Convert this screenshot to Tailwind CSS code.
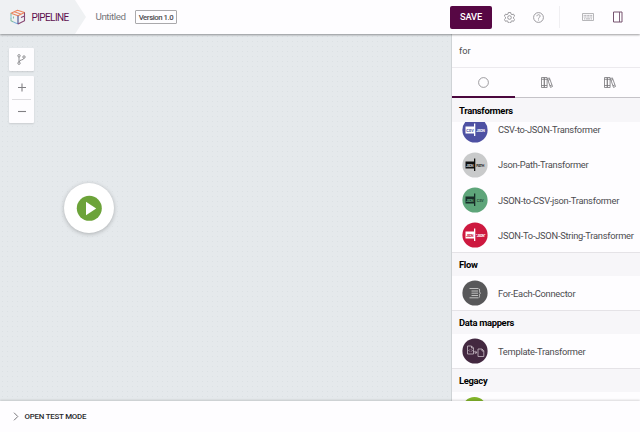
<!DOCTYPE html>
<html lang="en">
<head>
<meta charset="utf-8">
<title>Pipeline</title>
<script src="https://cdn.jsdelivr.net/npm/@tailwindcss/browser@4"></script>
</head>
<body class="w-[640px] h-[432px] overflow-hidden bg-[#fefdff] font-['Roboto',sans-serif] text-[#4c4c4f] flex flex-col">

<header class="relative z-10 h-[34px] shrink-0 flex items-center bg-[#fefdff] shadow-[0_1px_2px_rgba(0,0,0,0.38)]">
  <div class="w-[86px] h-full shrink-0 bg-[#eff1f3] [clip-path:polygon(0_0,75px_0,86px_50%,75px_100%,0_100%)] flex items-center pl-[10px] gap-[5.500px]">
    <svg class="w-4 h-4" viewBox="0 0 16 16" fill="none" stroke-width="1.100" stroke-linejoin="round">
      <path d="M1 4.200 7.500 1.200l7 2.400L8 6.800zM4.200 2.800l7.200 2.400" stroke="#eb8660"/>
      <path d="M1 4.200v3M1 9v2.700l2.500 1.200M3.500 7.500v2" stroke="#82bda2"/>
      <path d="M3.500 12.900 8 15M1 7.200v2" stroke="#83b6df"/>
      <path d="M8 15V6.800" stroke="#454b8a"/>
      <path d="M8 15l6.500-3.300V3.600M11 8.500l3.500-1.500" stroke="#894873"/>
    </svg>
    <span class="text-[10px] tracking-[-0.600px] text-[#5e104e]">PIPELINE</span>
  </div>
  <span class="ml-[9.500px] w-[39.500px] text-[9.800px] tracking-[-0.450px] text-[#77777b]">Untitled</span>
  <span class="w-[42px] h-[14px] border border-[#aaa9ac] rounded-[1px] flex items-center justify-center pt-px text-[7.800px] tracking-[-0.450px] font-medium whitespace-nowrap">Version 1.0</span>
  <button class="ml-[273px] w-[42px] h-[23px] rounded-[2px] bg-[#570744] text-white text-[9.300px] tracking-[-0.150px] font-medium">SAVE</button>
  <svg class="ml-[12px] w-[11px] h-[11px]" viewBox="0 0 24 24" fill="none" stroke="#929195" stroke-width="2"><path d="M9.5 1h5l.8 3.5 2 1.2 3.5-1 2.4 4.2-2.5 2.4v2.4l2.5 2.5-2.4 4.1-3.5-1-2 1.2-.8 3.5h-5l-.8-3.5-2-1.2-3.5 1L.8 16.200l2.500-2.500v-2.400L.8 8.900l2.400-4.200 3.500 1 2-1.200z"/><circle cx="12" cy="12" r="4"/></svg>
  <svg class="ml-[18px] w-[11px] h-[11px]" viewBox="0 0 22 22" fill="none" stroke="#929195" stroke-width="1.8"><circle cx="11" cy="11" r="9.800"/><path d="M7.800 8.500c0-4.200 6.500-4 6.500-.2 0 2.400-3.300 2.300-3.300 5M11 15v2"/></svg>
  <div class="ml-[15px] w-px h-[22px] bg-[#f0eff2]"></div>
  <svg class="ml-[22px] w-[12px] h-[8px]" viewBox="0 0 12 8" fill="none" stroke="#9b9a9e"><rect x=".4" y=".4" width="11.200" height="7.200" rx=".6" stroke-width=".8"/><path d="M1.700 2.400h8.600M1.700 4h8.600" stroke-width=".9" stroke-dasharray="1 .5"/><path d="M2 5.900h1M3.600 5.900h4.800M9 5.900h1" stroke-width=".8"/></svg>
  <svg class="ml-[19px] w-[10px] h-[12px]" viewBox="0 0 10 12" fill="none" stroke="#76536f"><path d="M.5 1v10h8.500V1z"/><path d="M6.500 1v10" stroke-width=".9"/></svg>
</header>

<main class="h-[367px] shrink-0 flex">
  <section class="w-[452px] shrink-0 border-r border-[#cfd3d6] bg-[#e5e9ec] bg-[radial-gradient(circle,#dce1e4_0.7px,transparent_1px)] bg-[size:5px_5px] pl-[9px] pt-[14px] flex flex-col">
    <button class="w-[25px] h-[23px] bg-[#fefdff] rounded-[1px] shadow-[0_1px_2px_rgba(0,0,0,0.12)] flex items-center justify-center">
      <svg class="w-[9px] h-[11px]" viewBox="0 0 9 11" fill="none" stroke="#858488" stroke-width=".9"><circle cx="2" cy="1.800" r="1.200"/><circle cx="2" cy="9.200" r="1.200"/><circle cx="7" cy="3" r="1.200"/><path d="M2 3v5M7 4.200C6.800 6.500 2.500 5.200 2 8"/></svg>
    </button>
    <div class="mt-[5px] w-[25px] h-[47px] bg-[#fefdff] rounded-[1px] shadow-[0_1px_2px_rgba(0,0,0,0.12)] flex flex-col items-center">
      <svg class="w-[8px] h-[23px]" viewBox="0 0 8 23" stroke="#818084" stroke-width="1.100"><path d="M0 11.500h8M4 7.500v8"/></svg>
      <div class="w-[19px] h-px bg-[#dedde0]"></div>
      <svg class="w-[8px] h-[23px]" viewBox="0 0 8 23" stroke="#818084" stroke-width="1.100"><path d="M0 11.500h8"/></svg>
    </div>
    <div class="mt-[60px] ml-[55px] w-[50px] h-[50px] rounded-full bg-white shadow-[0_1px_4px_rgba(0,0,0,0.25)] flex items-center justify-center">
      <svg class="w-[26px] h-[26px]" viewBox="0 0 26 26"><circle cx="13.300" cy="13.300" r="12.500" fill="#6ca339"/><path d="M10 6.800v13.400L20.200 13.500z" fill="#fff"/></svg>
    </div>
  </section>

  <aside class="w-[188px] shrink-0 flex flex-col overflow-hidden bg-[#fefdff]">
    <div class="h-[34px] shrink-0 border-b border-[#eceaee] pl-[7px] flex items-center text-[9.300px]">for</div>
    <nav class="h-[30px] shrink-0 border-b border-[#c5c3c8] grid grid-cols-3">
      <div class="-mb-px border-b-2 border-[#4b083e] flex items-center justify-center"><svg class="w-[11px] h-[11px]" viewBox="0 0 11 11" fill="none" stroke="#858488" stroke-width=".8"><circle cx="5.500" cy="5.500" r="4.900"/></svg></div>
      <div class="flex items-center justify-center pl-[2px]"><svg class="w-[12px] h-[11px]" viewBox="0 0 12 11" fill="none" stroke="#77767a" stroke-width=".8"><path d="M.5.500h2.800v10H.5zM3.300.500h2.800v10H3.300zM.5 2.300h5.600M.5 8.500h5.600M6.400 1.700 8.400.900l3.100 8.600-2 .9zM7 3.300l2-.8M8.900 8.700l2-.8"/></svg></div>
      <div class="flex items-center justify-center pl-[2px]"><svg class="w-[12px] h-[11px]" viewBox="0 0 12 11" fill="none" stroke="#77767a" stroke-width=".8"><path d="M.5.500h2.800v10H.5zM3.300.500h2.800v10H3.300zM.5 2.300h5.600M.5 8.500h5.600M6.400 1.700 8.400.900l3.100 8.600-2 .9zM7 3.300l2-.8M8.900 8.700l2-.8"/></svg></div>
    </nav>
    <h2 class="h-[24px] shrink-0 bg-[#f7f6f9] pl-[7px] pt-[3px] flex items-center text-[9.400px] tracking-[-0.300px] font-bold text-black">Transformers</h2>
    <div class="h-[130px] shrink-0 overflow-hidden text-[9.300px] tracking-[-0.250px]">
      <ul class="-mt-[10px]">
        <li class="h-[35.250px] pl-[10px] flex items-center gap-[10px] whitespace-nowrap">
          <svg class="w-[26px] h-[26px] shrink-0 tracking-normal" viewBox="0 0 26 26"><circle cx="13" cy="13" r="12.600" fill="#4e51a3"/><path d="M3.500 9.500h8.500v7H3.500zM12 6.500h1.300v12.500H12z" fill="#fff"/><text x="4.300" y="14.600" font-size="3.900" font-weight="700" fill="#4e51a3">CSV</text><text x="14.300" y="14.600" font-size="3.700" font-weight="700" fill="#fff" textLength="8.500">JSON</text></svg>
          <span class="pt-px">CSV-to-JSON-Transformer</span></li>
        <li class="h-[35.250px] pl-[10px] flex items-center gap-[10px] whitespace-nowrap">
          <svg class="w-[26px] h-[26px] shrink-0 tracking-normal" viewBox="0 0 26 26"><circle cx="13" cy="13" r="12.600" fill="#c9cacb"/><path d="M3.500 9.500h8.500v7H3.500zM12 6.500h1.300v12.500H12z" fill="#111"/><text x="4" y="14.600" font-size="3.600" font-weight="700" fill="#c9cacb" textLength="7.500">JSON</text><text x="14.300" y="14.600" font-size="3.600" font-weight="700" fill="#222" textLength="8">PATH</text></svg>
          <span class="pt-px">Json-Path-Transformer</span></li>
        <li class="h-[35.250px] pl-[10px] flex items-center gap-[10px] whitespace-nowrap">
          <svg class="w-[26px] h-[26px] shrink-0 tracking-normal" viewBox="0 0 26 26"><circle cx="13" cy="13" r="12.600" fill="#5ea57a"/><path d="M3.500 9.500h8.500v7H3.500zM12 6.500h1.300v12.500H12z" fill="#172c28"/><text x="4" y="14.600" font-size="3.600" font-weight="700" fill="#5ea57a" textLength="7.500">JSON</text><text x="14.800" y="14.600" font-size="3.600" font-weight="700" fill="#264b39">CSV</text></svg>
          <span class="pt-px">JSON-to-CSV-json-Transformer</span></li>
        <li class="h-[35.250px] pl-[10px] flex items-center gap-[10px] whitespace-nowrap">
          <svg class="w-[26px] h-[26px] shrink-0 tracking-normal" viewBox="0 0 26 26"><circle cx="13" cy="13" r="12.600" fill="#cd183f"/><path d="M3.500 9.500h8.500v7H3.500zM12 6.500h1.300v12.500H12z" fill="#fff"/><text x="4" y="14.600" font-size="3.600" font-weight="700" fill="#cd183f" textLength="7.500">JSON</text><text x="14" y="14.600" font-size="3.500" font-weight="700" fill="#fff" textLength="9.300">"JSON"</text></svg>
          <span class="pt-[2px]">JSON-To-JSON-String-Transformer</span></li>
      </ul>
    </div>
    <h2 class="h-[24px] shrink-0 border-t border-[#e5e3e7] bg-[#f7f6f9] pl-[7px] pt-[2px] flex items-center text-[9.400px] tracking-[-0.300px] font-bold text-black">Flow</h2>
    <div class="h-[34px] shrink-0 pl-[10px] flex items-center gap-[10px] text-[9.300px] tracking-[-0.250px]">
      <svg class="w-[26px] h-[26px] shrink-0" viewBox="0 0 26 26" fill="none"><circle cx="13" cy="13" r="12.600" fill="#58585a"/><path d="M7.500 8.500h8.500M9.500 11h6.500M9.500 13.200h6.500M9.500 15.500h6.500M7.500 17.800h8.500M16.500 8.500c1.500 0 1 3 1 3.500s.5 1 1 1.200c-.5.200-1 .7-1 1.300s.5 3.300-1 3.300" stroke="#ccc" stroke-width=".9"/></svg>
      <span class="pt-[2px]">For-Each-Connector</span>
    </div>
    <h2 class="h-[24px] shrink-0 border-t border-[#e5e3e7] bg-[#f7f6f9] pl-[7px] pt-[2px] flex items-center text-[9.400px] tracking-[-0.300px] font-bold text-black">Data mappers</h2>
    <div class="h-[34px] shrink-0 pl-[10px] flex items-center gap-[10px] text-[9.300px] tracking-[-0.250px]">
      <svg class="w-[26px] h-[26px] shrink-0" viewBox="0 0 26 26" fill="none" stroke="#c9bcc6" stroke-width=".8"><circle cx="13" cy="13" r="12.600" fill="#432840" stroke="none"/><path d="M5.500 8h4l2 2v6h-6zM9.500 8v2h2M16 11h4l1.800 1.800V18.500H16zM20 11v2h1.800M7.800 11.500l-1 1 1 1M9.300 11.500l1 1-1 1M11.500 13.500l3.300 1.200M13.500 12.800l1.300 1.900-2 .8"/></svg>
      <span class="pt-[2px]">Template-Transformer</span>
    </div>
    <h2 class="h-[24px] shrink-0 border-t border-[#e5e3e7] bg-[#f7f6f9] pl-[7px] pt-[2px] flex items-center text-[9.400px] tracking-[-0.300px] font-bold text-black">Legacy</h2>
    <div class="h-[34px] shrink-0 pl-[10px] pt-[4.500px]">
      <div class="w-[25px] h-[25px] rounded-full bg-[#83b52b]"></div>
    </div>
  </aside>
</main>

<footer class="relative h-[31px] shrink-0 bg-[#fefdff] shadow-[0_-1px_2px_rgba(0,0,0,0.15)] pl-[13px] flex items-center">
  <svg class="w-[6px] h-[9px]" viewBox="0 0 6 9" fill="none" stroke="#77767a"><path d="M1 .7 4.800 4.500 1 8.300"/></svg>
  <span class="ml-[5.500px] text-[7.900px] tracking-[-0.230px] font-medium text-[#29292b]">OPEN TEST MODE</span>
</footer>
</body>
</html>
